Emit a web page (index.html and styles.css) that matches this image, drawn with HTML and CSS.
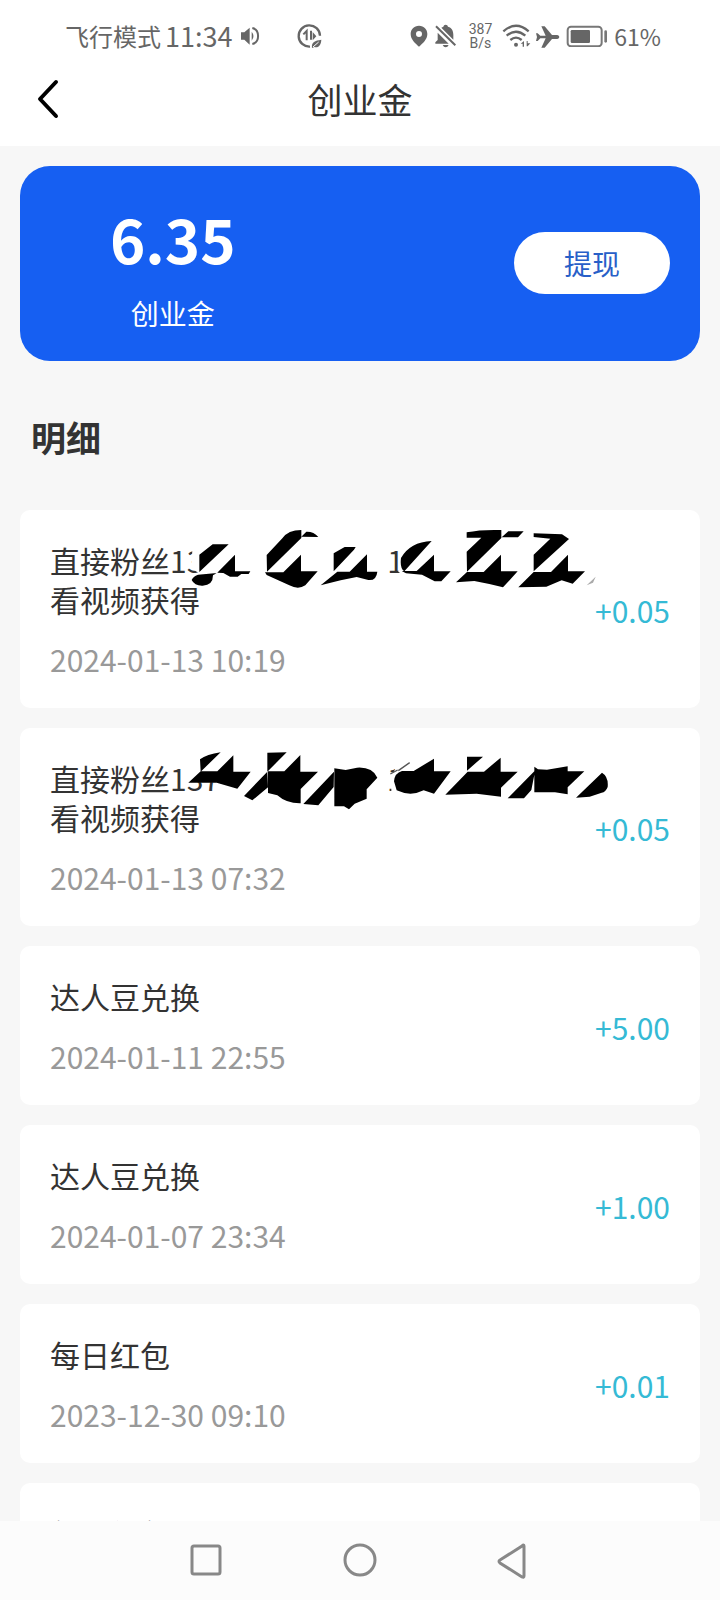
FILE: index.html
```html
<!DOCTYPE html>
<html lang="zh-CN">
<head>
<meta charset="utf-8">
<meta name="viewport" content="width=device-width, initial-scale=1">
<title>创业金</title>
<link rel="stylesheet" href="styles.css">
</head>
<body>
<div class="app">
  <div class="status">
    <span class="carrier">飞行模式</span>
    <span class="clock">11:34</span>
    <svg class="speaker" width="20" height="20" viewBox="720 78 60 60"><path d="M723 97h10l16-14v51l-16-15h-10z" fill="#666"/><path d="M755 95q11 13 0 27z" fill="#666"/><path d="M757 84c23 5 23 43 0 48" fill="none" stroke="#666" stroke-width="6"/></svg>
    <svg class="saver" width="27" height="26" viewBox="890 70 81 78"><path d="M932 141a32 32 0 1 1 30-33" fill="none" stroke="#666" stroke-width="7"/><path d="M912 104l10-10v28M935 93v27" fill="none" stroke="#666" stroke-width="6"/><path d="M940 97v25l11-12z" fill="#666"/><path d="M938 145c-2-19 9-22 28-25-1 17-9 25-20 22z" fill="#666"/><path d="M941 142l17-15" stroke="#fff" stroke-width="3"/></svg>
    <div class="status-right">
      <svg width="18" height="22" viewBox="144 75 54 66"><path fill="#666" fill-rule="evenodd" d="M171 77c-15 0-25 11-25 25 0 17 14 28 25 38 11-10 25-21 25-38 0-14-10-25-25-25zm0 16a9 9 0 1 1 0 18 9 9 0 0 1 0-18z"/></svg>
      <svg width="23" height="24" viewBox="219 72 69 72"><path d="M241 83l6-3q1-6 7-6t7 6c13 4 16 14 16 25v14zM230 98l33 33h-40v-4l7-7zM245 135h18q-3 7-9 7t-9-7z" fill="#666"/><path d="M225 79l58 57" stroke="#666" stroke-width="6"/></svg>
      <span class="speed">387<br>B/s</span>
      <svg width="29" height="24" viewBox="429 72 87 72"><path d="M433 94q38-33 76 0M443 107q28-24 56 0M454 120q17-14 34 0" fill="none" stroke="#666" stroke-width="7"/><circle cx="471" cy="134" r="6" fill="#666"/><path d="M485 131l10-8v17h-4v-9zM503 123h3v7h8l-8 9h-3z" fill="#666"/></svg>
      <svg class="tight" width="25" height="23" viewBox="528 72 75 69"><path d="M531 97h5l8 7h16l-13-28h10l22 26h16q6 1 6 6t-6 6h-16l-22 26h-10l13-28h-16l-8 8h-5l3-12z" fill="#666"/></svg>
      <svg width="42" height="22" viewBox="621 75 126 66"><rect x="626" y="80" width="102" height="59" rx="10" fill="none" stroke="#777" stroke-width="6"/><rect x="635" y="90" width="58" height="39" rx="4" fill="#666"/><path d="M740 95v29" stroke="#777" stroke-width="8" stroke-linecap="round"/></svg>
      <span class="percent">61%</span>
    </div>
  </div>

  <header class="titlebar">
    <button class="back" type="button" aria-label="返回"><svg width="24" height="40" viewBox="0 0 24 40"><path d="M20 3L4 20l16 17" fill="none" stroke="#000" stroke-width="4" stroke-linecap="round" stroke-linejoin="round"/></svg></button>
    <h1>创业金</h1>
  </header>

  <main class="content">
    <section class="balance">
      <div class="balance-info">
        <strong>6.35</strong>
        <span>创业金</span>
      </div>
      <button class="withdraw" type="button">提现</button>
    </section>

    <h2>明细</h2>

    <ul class="records">
      <li class="record">
        <div class="info">
          <p class="name">直接粉丝13<span class="masked"></span>1<br>看视频获得
            <svg class="scribble" viewBox="540 60 1320 240" aria-hidden="true">
              <path fill="#fff" d="M574 205l3-55 20-10 20-30h460l85 40v75l-75 10h-480l-10-15z"/>
              <path fill="#fff" d="M1195 215l15-115h440v160h-390z"/>
              <path d="M598 164l40-31h48l-88 83zM705 164v50h46l-5 8h-22l-11 8h-23l-20-11-18-1-13 8q0 30-31 31-24 1-33-17 4-11 19-16l57-5zM800 165l47-50q17-25 57-25v24l-103 101zM904 110l15-15q22-1 36 16zM903 164v50h50l-37 42q-21 14-48 0l-68-31-5-8h55zM1001 160l33-19h33l-5 8-61 65zM1101 163v52h31q-3 28-27 25l-35-9-48 10-60 15 50-41h37z"/>
              <path d="M1203 174q27-48 92-51l-82 91q-14-8-10-40zM1302 164v50h50l-28 30h-20l-38-20-48-4-13-7h45zM1400 97q43-9 104-7v24l-103 101-1-60 44-42h-44zM1505 112l20-18h46l-17 18zM1503 164v50h50l-44 48-41-10-45-9-55 4 33-31h50zM1601 100l85 3 21 14-106 97v-50l50-48-50-5zM1704 164v50h51l-37 37-33-10-46 19-84 2 46-46h52z"/>
              <path d="M1760 256l27-26-8 18z" fill="#aaa"/>
            </svg>
          </p>
          <time>2024-01-13 10:19</time>
        </div>
        <span class="amount">+0.05</span>
      </li>
      <li class="record">
        <div class="info">
          <p class="name">直接粉丝137<span class="masked short"></span>1<br>看视频获得
            <svg class="scribble" viewBox="540 54 1320 240" aria-hidden="true">
              <path fill="#fff" d="M551 154l50-54h455v80l-60 60H720l-23-45-72-10-32 2-42-8z"/>
              <path fill="#fff" d="M1174 170l25-50h520l110 70-120 60h-440l-95-20z"/>
              <path d="M600 118q20-15 62-21l-60 58zM652 154l48-48v49h52l-40 51-62-18h-85l37-34zM802 98l58-1-58 58zM804 202l-47 39-25-13 70-73zM853 154l48-49v50h53l-52 52v43q-42 1-70-24l-28-7v-65zM1001 201l-46 55-45-4 92-97zM1003 145l34 5 34-7q46-3 61 30l-32 35v28l-36 15-17 17-15-9h-29z"/>
              <path d="M1182 184q2-25 24-31h35l61-37v38h50l-50 67-31-10q-39 20-81 0zM1401 110h48l-48 42zM1452 155l50-42v42h51l-50 48v27l-73-9-94 3 67-69zM1603 164l-9 46-22 25h-49l80-81v-14l11 8 27 1 62-10v15h50l-50 48v21l-38-6h-62zM1806 158q20 12 17 43-6 16-18 17l-36 12-41 3z"/>
              <path d="M1171 162l22-12M1195 152l34-24" stroke="#555" stroke-width="4"/>
            </svg>
          </p>
          <time>2024-01-13 07:32</time>
        </div>
        <span class="amount">+0.05</span>
      </li>
      <li class="record">
        <div class="info"><p class="name">达人豆兑换</p><time>2024-01-11 22:55</time></div>
        <span class="amount">+5.00</span>
      </li>
      <li class="record">
        <div class="info"><p class="name">达人豆兑换</p><time>2024-01-07 23:34</time></div>
        <span class="amount">+1.00</span>
      </li>
      <li class="record">
        <div class="info"><p class="name">每日红包</p><time>2023-12-30 09:10</time></div>
        <span class="amount">+0.01</span>
      </li>
      <li class="record">
        <div class="info"><p class="name">每日红包</p></div>
      </li>
    </ul>
  </main>

  <nav class="sysnav">
    <button type="button" aria-label="最近任务"><svg width="36" height="36" viewBox="0 0 36 36"><rect x="3" y="3" width="28" height="28" rx="2"/></svg></button>
    <button type="button" aria-label="主页"><svg width="36" height="36" viewBox="0 0 36 36"><circle cx="18" cy="17" r="15"/></svg></button>
    <button type="button" aria-label="后退"><svg width="36" height="36" viewBox="0 0 36 36"><path d="M29 3v30q0 2-2 1L5 20q-2-2 0-3L27 3q2-2 2 0z"/></svg></button>
  </nav>
</div>
</body>
</html>
```
FILE: styles.css
```css
* {
  box-sizing: border-box;
  margin: 0;
  padding: 0;
}

body {
  background: #f7f7f7;
  color: #333;
  font-family: "Noto Sans CJK SC", "Noto Sans", sans-serif;
}

button {
  border: 0;
  background: none;
  font: inherit;
  cursor: pointer;
}

svg {
  display: block;
  flex: none;
}

.app {
  display: flex;
  flex-direction: column;
  height: 100vh;
  overflow: hidden;
}

.status {
  display: flex;
  align-items: center;
  flex: none;
  height: 54px;
  padding: 18px 59px 0 65px;
  background: #fff;
  color: #666;
  line-height: 36px;
}

.carrier {
  font-size: 24px;
}

.clock {
  margin-left: 4px;
  font-size: 27px;
}

.speaker {
  margin-left: 8px;
}

.saver {
  margin-left: 36px;
}

.status-right {
  display: flex;
  align-items: center;
  gap: 6px;
  margin-left: auto;
}

.speed {
  margin: 0 4px 0 6px;
  font: 14px/14px Roboto, sans-serif;
  text-align: center;
}

.tight {
  margin-left: -2px;
}

.percent {
  font-size: 23px;
}

.titlebar {
  display: grid;
  grid-template-columns: 1fr auto 1fr;
  align-items: center;
  flex: none;
  height: 92px;
  padding: 0 36px 3px;
  background: #fff;
}

.back {
  justify-self: start;
}

.titlebar h1 {
  font-size: 35px;
  font-weight: 400;
  line-height: 48px;
}

.content {
  flex: 1;
  min-height: 0;
  overflow: hidden;
  padding: 20px 20px 0;
}

.balance {
  display: flex;
  align-items: center;
  justify-content: space-between;
  padding: 36px 30px 28px 0;
  border-radius: 30px;
  background: #165ff2;
  color: #fff;
}

.balance-info {
  display: flex;
  flex-direction: column;
  align-items: center;
  width: 47%;
}

.balance-info strong {
  font-size: 60px;
  line-height: 72px;
}

.balance-info span {
  margin-top: 19px;
  font-size: 28px;
  line-height: 40px;
}

.withdraw {
  width: 156px;
  height: 62px;
  margin-bottom: 10px;
  border-radius: 31px;
  background: #fff;
  color: #285fc8;
  font-size: 28px;
}

h2 {
  padding: 53px 11px 51px;
  font-size: 35px;
  line-height: 45px;
}

.records {
  display: flex;
  flex-direction: column;
  gap: 20px;
  list-style: none;
}

.record {
  display: flex;
  align-items: center;
  justify-content: space-between;
  min-height: 159px;
  padding: 31px 30px 29px;
  border-radius: 10px;
  background: #fff;
}

.info {
  display: flex;
  flex-direction: column;
  align-self: flex-start;
  gap: 20px;
}

.name {
  position: relative;
  font-size: 30px;
  line-height: 39px;
}

.masked {
  display: inline-block;
  width: 184px;
}

.masked.short {
  width: 167px;
}

.scribble {
  position: absolute;
  top: -21px;
  left: 130px;
  width: 440px;
  height: 80px;
}

time {
  color: #999;
  font-size: 30px;
  line-height: 40px;
}

.amount {
  color: #35bad5;
  font-size: 30px;
  line-height: 38px;
}

.sysnav {
  display: flex;
  align-items: center;
  justify-content: center;
  gap: 117px;
  flex: none;
  height: 79px;
  background: #fcfcfc;
}

.sysnav svg {
  fill: none;
  stroke: #888;
  stroke-width: 3px;
}
```
